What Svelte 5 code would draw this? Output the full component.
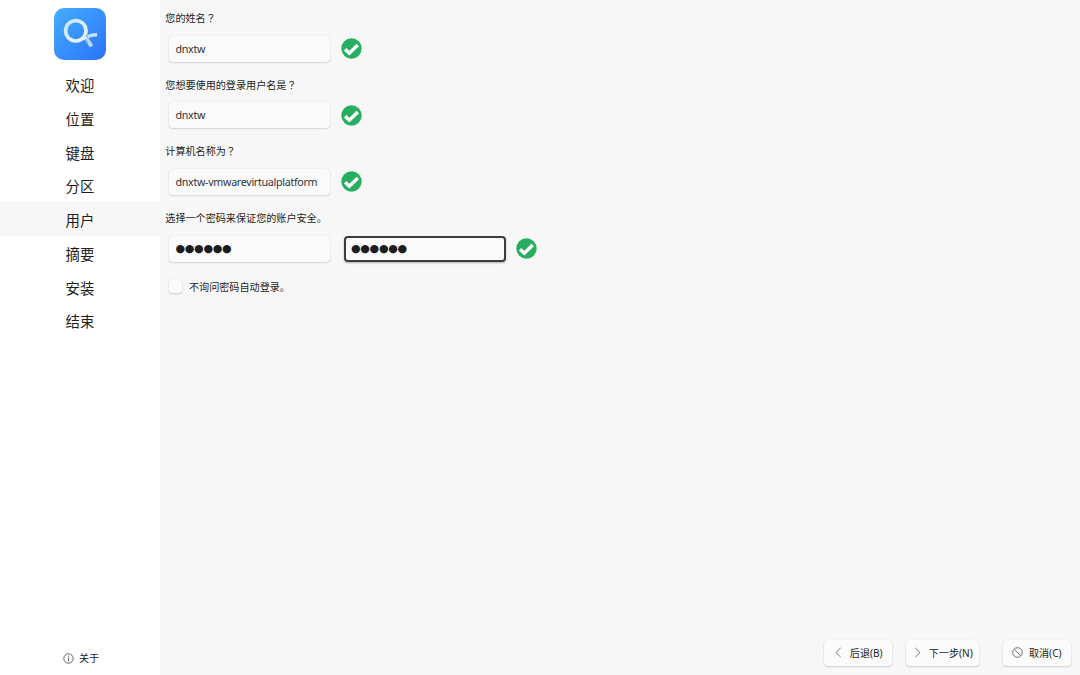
<script lang="ts">
  /**
   * Installer users page
   *
   * Step sidebar, account form and navigation buttons
   */

  const steps = ['欢迎', '位置', '键盘', '分区', '用户', '摘要', '安装', '结束'];
  const current = '用户';

  const mask = '●●●●●●';

  let fields = $state([
    { id: 'fullname', label: '您的姓名', value: 'dnxtw' },
    { id: 'login', label: '您想要使用的登录用户名是', value: 'dnxtw' },
    { id: 'hostname', label: '计算机名称为', value: 'dnxtw-vmwarevirtualplatform' },
  ]);

  let autologin = $state(false);
</script>

{#snippet valid()}
  <svg class="valid" viewBox="0 0 21 21" aria-hidden="true">
    <circle cx="10.5" cy="10.5" r="10.2" fill="#27ae60" />
    <path d="M4.1 11.3 L8.3 15.2 L16.8 7" fill="none" stroke="#fff" stroke-width="3.5" />
  </svg>
{/snippet}

<div class="installer">
  <aside class="sidebar">
    <svg class="logo" viewBox="0 0 52 52" aria-hidden="true">
      <defs>
        <linearGradient id="logo-bg" x1="0" y1="0" x2="1" y2="1">
          <stop offset="0" stop-color="#43aefc" />
          <stop offset="1" stop-color="#2c73fb" />
        </linearGradient>
        <linearGradient id="logo-ring" x1="0" y1="0" x2="0.8" y2="1">
          <stop offset="0" stop-color="#c5e6ff" />
          <stop offset="1" stop-color="#edf5ff" />
        </linearGradient>
      </defs>
      <rect width="52" height="52" rx="10" fill="url(#logo-bg)" />
      <path d="M30.2 31.8 Q34 26.8 43.2 26.8" fill="none" stroke="#c6deff" stroke-width="3.4" />
      <path d="M31.6 30.6 Q35 33 37.4 38.6" fill="none" stroke="#b9d7ff" stroke-width="3.8" />
      <circle cx="21.8" cy="22.8" r="10.2" fill="none" stroke="url(#logo-ring)" stroke-width="3.6" />
      <path d="M29.4 31 L32.4 28" stroke="#dcecff" stroke-width="2.6" />
      <path d="M31.8 27 L33.6 29.6 M31 31.6 L33.6 34" stroke="#3f8efc" stroke-width="0.9" />
    </svg>

    <nav class="steps">
      {#each steps as step}
        <div class="step" class:step--current={step === current}>{step}</div>
      {/each}
    </nav>

    <button class="about" type="button">
      <svg class="about__icon" viewBox="0 0 11 11" aria-hidden="true">
        <circle cx="5.5" cy="5.5" r="4.7" />
        <path d="M5.5 2.6 V3.7 M5.5 4.6 V8.4" />
      </svg>
      <span>关于</span>
    </button>
  </aside>

  <main class="page">
    <form class="form">
      {#each fields as field (field.id)}
        <div class="field">
          <label class="label" for={field.id}>{field.label}<span class="mark">？</span></label>
          <div class="row">
            <input class="input" id={field.id} type="text" spellcheck="false" bind:value={field.value} />
            {@render valid()}
          </div>
        </div>
      {/each}

      <div class="field">
        <label class="label" for="password">选择一个密码来保证您的账户安全。</label>
        <div class="row">
          <input class="input input--masked" id="password" type="text" value={mask} />
          <input class="input input--masked input--active" type="text" value={mask} />
          {@render valid()}
        </div>
      </div>

      <label class="check">
        <input class="check__box" type="checkbox" bind:checked={autologin} />
        <span>不询问密码自动登录。</span>
      </label>
    </form>

    <footer class="actions">
      <button class="btn btn--back" type="button">
        <svg class="btn__icon" viewBox="0 0 11 11" aria-hidden="true"><path d="M7.6 1 L3 5.5 L7.6 10" /></svg>
        <span>后退(B)</span>
      </button>
      <button class="btn btn--next" type="button">
        <svg class="btn__icon" viewBox="0 0 11 11" aria-hidden="true"><path d="M3.4 1 L8 5.5 L3.4 10" /></svg>
        <span>下一步(N)</span>
      </button>
      <button class="btn btn--cancel" type="button">
        <svg class="btn__icon" viewBox="0 0 11 11" aria-hidden="true">
          <circle cx="5.5" cy="5.5" r="4.8" />
          <path d="M2.2 2.2 L8.8 8.8" />
        </svg>
        <span>取消(C)</span>
      </button>
    </footer>
  </main>
</div>

<style>
  :global(body) {
    margin: 0;
  }

  .installer {
    display: flex;
    width: 100vw;
    height: 100vh;
    overflow: hidden;
    font-family: 'Noto Sans', 'Noto Sans CJK SC', sans-serif;
    font-size: 10.1px;
    color: #1d1e20;
    background: #f7f7f7;
  }

  .installer * {
    box-sizing: border-box;
  }

  /* Sidebar */
  .sidebar {
    display: flex;
    flex-direction: column;
    align-items: center;
    flex: none;
    width: 160px;
    padding-top: 8px;
    background: #fff;
  }

  .logo {
    flex: none;
    width: 52px;
    height: 52px;
  }

  .steps {
    width: 100%;
    margin-top: 7.4px;
  }

  .step {
    height: 33.75px;
    padding-top: 1.7px;
    font-size: 14.4px;
    line-height: 33.75px;
    text-align: center;
  }

  .step--current {
    background: #f7f7f7;
  }

  .about {
    display: flex;
    align-items: center;
    gap: 5px;
    margin: auto 0 9px 2px;
    padding: 0;
    border: none;
    background: none;
    font: inherit;
    line-height: 16px;
    color: inherit;
  }

  .about__icon {
    width: 11px;
    height: 11px;
    fill: none;
    stroke: #555;
    stroke-width: 0.9;
  }

  /* Form */
  .page {
    display: flex;
    flex: 1;
    flex-direction: column;
    justify-content: space-between;
  }

  .form {
    padding: 10px 0 0 5.3px;
  }

  .field {
    height: 66.7px;
  }

  .label {
    display: block;
    height: 16px;
    line-height: 16px;
  }

  /* Question mark centred in its em box */
  .mark {
    font-family: 'Noto Sans CJK TC', sans-serif;
  }

  .row {
    display: flex;
    align-items: center;
    height: 26px;
    margin: 9.5px 0 0 3.7px;
  }

  .input {
    width: 161px;
    height: 26px;
    padding: 0 6.5px;
    border: none;
    border-radius: 4px;
    outline: none;
    background: #fafafa;
    box-shadow: 0 0 1px rgba(0, 0, 0, 0.16), 0 1px 2px rgba(0, 0, 0, 0.13);
    font: inherit;
    font-size: 10.7px;
    letter-spacing: -0.3px;
    color: #303235;
  }

  .input + .input {
    margin-left: 14px;
  }

  .input--masked {
    font-family: 'DejaVu Sans', sans-serif;
    font-size: 11px;
    letter-spacing: -0.3px;
    color: #1b1c1e;
  }

  .input--active {
    width: 162px;
    border: 2px solid #3c3d3f;
    padding: 0 5px;
    box-shadow: 0 1px 2px rgba(0, 0, 0, 0.3);
  }

  .valid {
    flex: none;
    width: 21px;
    height: 21px;
    margin-left: 10.6px;
  }

  .input--active + .valid {
    margin-left: 10px;
  }

  .check {
    display: flex;
    align-items: center;
    gap: 7px;
    height: 16px;
    margin: 2px 0 0 3.7px;
  }

  .check__box {
    width: 13px;
    height: 13px;
    margin: 0;
    appearance: none;
    border-radius: 3px;
    background: #fcfcfc;
    box-shadow: 0 0 1px rgba(0, 0, 0, 0.2), 0 1px 2px rgba(0, 0, 0, 0.16);
  }

  /* Navigation buttons */
  .actions {
    display: flex;
    justify-content: flex-end;
    padding: 0 9px 9px 0;
  }

  .btn {
    display: flex;
    align-items: center;
    justify-content: center;
    gap: 5.5px;
    height: 26px;
    padding: 0 0 1px;
    border: none;
    border-radius: 4px;
    background: #fbfbfb;
    box-shadow: 0 0 1px rgba(0, 0, 0, 0.12), 0 1px 2px rgba(0, 0, 0, 0.16);
    font: inherit;
    font-size: 10.1px;
    white-space: nowrap;
    color: inherit;
  }

  .btn--back {
    width: 68px;
  }

  .btn--next {
    width: 73px;
    margin-left: 14px;
  }

  .btn--cancel {
    width: 68px;
    margin-left: 24px;
  }

  .btn__icon {
    width: 11px;
    height: 11px;
    fill: none;
    stroke: #666;
    stroke-width: 0.9;
  }
</style>
